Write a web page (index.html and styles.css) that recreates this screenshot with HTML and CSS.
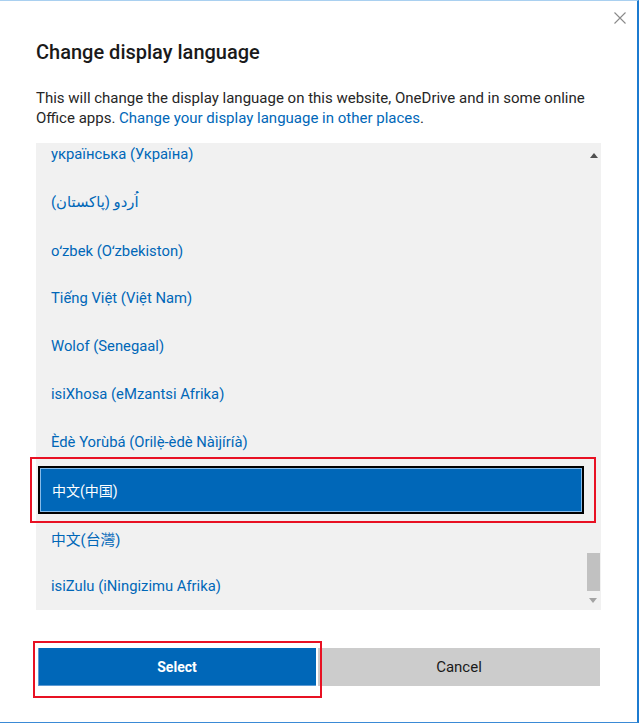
FILE: index.html
```html
<!DOCTYPE html>
<html lang="en">
<head>
<meta charset="utf-8">
<title>Change display language</title>
<link rel="stylesheet" href="styles.css">
</head>
<body>
<div class="window">
  <button class="close" aria-label="Close">
    <svg width="12" height="12" viewBox="0 0 12 12"><path d="M0.5 0.5 L11.5 11.5 M11.5 0.5 L0.5 11.5" stroke="#8a8a8a" stroke-width="1.1" fill="none"/></svg>
  </button>
  <div class="content">
    <h1 class="title">Change display language</h1>
    <p class="desc"><span>This will change the display language on this website, OneDrive and in some online</span> <span>Office apps.</span> <a class="link" href="#">Change your display language in other places</a><span>.</span></p>
    <div class="listbox">
      <div class="list">
        <div class="items">
          <div class="item">українська (Україна)</div>
          <div class="item">اُردو (پاکستان)</div>
          <div class="item">oʻzbek (Oʻzbekiston)</div>
          <div class="item">Tiếng Việt (Việt Nam)</div>
          <div class="item">Wolof (Senegaal)</div>
          <div class="item">isiXhosa (eMzantsi Afrika)</div>
          <div class="item">Èdè Yorùbá (Orilẹ̀-èdè Nàìjíríà)</div>
          <div class="item selected">中文(中国)</div>
          <div class="item">中文(台灣)</div>
          <div class="item">isiZulu (iNingizimu Afrika)</div>
        </div>
      </div>
      <div class="scrollbar">
        <div class="sb-up"><span class="arrow-up"></span></div>
        <div class="sb-track"><div class="sb-thumb"></div></div>
        <div class="sb-down"><span class="arrow-down"></span></div>
      </div>
    </div>
    <div class="buttons">
      <button class="btn btn-primary">Select</button>
      <button class="btn btn-secondary">Cancel</button>
    </div>
  </div>
  <div class="mark mark-item"></div>
  <div class="mark mark-button"></div>
</div>
</body>
</html>
```
FILE: styles.css
```css
html, body {
  margin: 0;
  padding: 0;
  background: #ffffff;
}

body {
  font-family: Roboto, "Noto Sans", "DejaVu Sans", "Noto Sans CJK SC", sans-serif;
  color: #1f1f1f;
}

.window {
  position: relative;
  width: 639px;
  height: 723px;
  box-sizing: border-box;
  border-top: 1px solid #a9d0f0;
  border-right: 2px solid #1c7bd0;
  border-bottom: 1px solid #3a8ad6;
  background: #ffffff;
}

.close {
  position: absolute;
  top: 11px;
  right: 11px;
  width: 12px;
  height: 12px;
  padding: 0;
  margin: 0;
  border: none;
  background: none;
  display: flex;
}

.content {
  padding: 37px 36px 0 36px;
  display: flex;
  flex-direction: column;
}

.title {
  margin: 0;
  font-size: 20px;
  line-height: 28px;
  font-weight: 500;
  color: #1a1a1a;
}

.desc {
  margin: 22px 0 0 0;
  font-size: 15px;
  line-height: 20px;
  color: #262626;
  width: 560px;
}

.link {
  color: #0067b8;
  text-decoration: none;
}

.listbox {
  margin-top: 15px;
  width: 565px;
  height: 467px;
  background: #f1f1f1;
  display: flex;
}

.list {
  flex: 1;
  overflow: hidden;
}

.items {
  margin-top: -13px;
  display: flex;
  flex-direction: column;
}

.item {
  height: 48px;
  box-sizing: border-box;
  display: flex;
  align-items: center;
  padding-left: 15px;
  font-size: 14.8px;
  color: #0067b8;
  white-space: nowrap;
}

.item.selected {
  margin: 0 0 0 2px;
  padding-left: 12px;
  border: 2px solid #000000;
  background: #0067b8;
  box-shadow: inset 0 0 0 1px #86bbe9;
  color: #ffffff;
  font-size: 14px;
}

.scrollbar {
  width: 17px;
  display: flex;
  flex-direction: column;
  background: #f1f1f1;
}

.sb-up {
  height: 25px;
  display: flex;
  align-items: center;
  justify-content: center;
}

.arrow-up {
  width: 0;
  height: 0;
  border-left: 4px solid transparent;
  border-right: 4px solid transparent;
  border-bottom: 5px solid #505050;
  margin-left: 2px;
}

.sb-track {
  flex: 1;
  display: flex;
  flex-direction: column;
  justify-content: flex-end;
  align-items: center;
}

.sb-thumb {
  width: 13px;
  height: 38px;
  background: #c1c1c1;
  margin-left: 2px;
}

.sb-down {
  height: 19px;
  display: flex;
  align-items: center;
  justify-content: center;
}

.arrow-down {
  width: 0;
  height: 0;
  border-left: 4px solid transparent;
  border-right: 4px solid transparent;
  border-top: 5px solid #a3a3a3;
  margin-left: 1px;
}

.buttons {
  margin-top: 38px;
  display: flex;
  gap: 2px;
  width: 564px;
}

.btn {
  height: 38px;
  margin: 0;
  border: none;
  font-family: inherit;
  font-size: 14px;
  padding: 0;
}

.btn-primary {
  margin-left: 2px;
  width: 278px;
  background: #0067b8;
  color: #ffffff;
  font-weight: 700;
  box-shadow: inset 1px -1px 0 #5d9ad3;
}

.btn-secondary {
  flex: 1;
  background: #cccccc;
  color: #1a1a1a;
  font-size: 15px;
}

.mark {
  position: absolute;
  border: 2px solid #e81123;
  box-sizing: border-box;
  pointer-events: none;
}

.mark-item {
  left: 30px;
  top: 456px;
  width: 566px;
  height: 66px;
}

.mark-button {
  left: 33px;
  top: 640px;
  width: 289px;
  height: 57px;
}
```
